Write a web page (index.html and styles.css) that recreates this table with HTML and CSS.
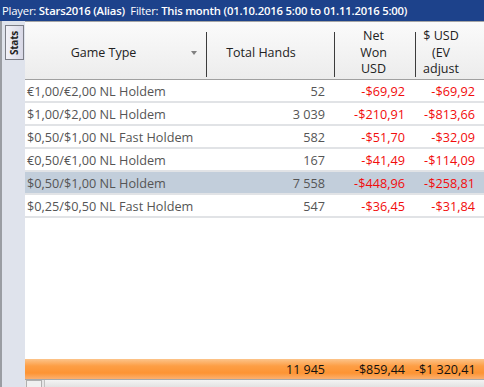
FILE: index.html
```html
<!DOCTYPE html>
<html>
<head>
<meta charset="utf-8">
<link rel="stylesheet" href="styles.css">
</head>
<body>
<div class="window">
  <div class="titlebar">Player: <b>Stars2016 (Alias)</b>&nbsp; Filter: <b>This month (01.10.2016 5:00 to 01.11.2016 5:00)</b></div>
  <div class="main">
    <div class="sidebar">
      <div class="tab"><span>Stats</span></div>
    </div>
    <div class="content">
      <div class="grid head">
        <div class="hcell c-game"><span>Game Type</span><i class="arrow"></i></div>
        <div class="hcell c-hands"><span>Total Hands</span></div>
        <div class="hcell c-net"><span>Net<br>Won<br>USD</span></div>
        <div class="hcell c-ev"><span>$ USD<br>(EV<br>adjust</span></div>
      </div>
      <div class="rows">
        <div class="grid row"><div class="game">€1,00/€2,00 NL Holdem</div><div class="num">52</div><div class="neg">-$69,92</div><div class="neg last">-$69,92</div></div>
        <div class="grid row"><div class="game">$1,00/$2,00 NL Holdem</div><div class="num">3 039</div><div class="neg">-$210,91</div><div class="neg last">-$813,66</div></div>
        <div class="grid row"><div class="game">$0,50/$1,00 NL Fast Holdem</div><div class="num">582</div><div class="neg">-$51,70</div><div class="neg last">-$32,09</div></div>
        <div class="grid row"><div class="game">€0,50/€1,00 NL Holdem</div><div class="num">167</div><div class="neg">-$41,49</div><div class="neg last">-$114,09</div></div>
        <div class="grid row selected"><div class="game">$0,50/$1,00 NL Holdem</div><div class="num">7 558</div><div class="neg">-$448,96</div><div class="neg last">-$258,81</div></div>
        <div class="grid row"><div class="game">$0,25/$0,50 NL Fast Holdem</div><div class="num">547</div><div class="neg">-$36,45</div><div class="neg last">-$31,84</div></div>
      </div>
      <div class="grid total"><div></div><div class="num">11 945</div><div class="num">-$859,44</div><div class="num last">-$1 320,41</div></div>
      <div class="hscroll"><div class="sbtn"></div><div class="strack"></div></div>
    </div>
  </div>
</div>
</body>
</html>
```
FILE: styles.css
```css
html, body {
  margin: 0;
  padding: 0;
  background: #ffffff;
}
.window {
  width: 484px;
  height: 387px;
  overflow: hidden;
  display: flex;
  flex-direction: column;
  font-family: "Open Sans", "Noto Sans", sans-serif;
  font-size: 12px;
}
.titlebar {
  height: 21px;
  flex: none;
  background: #1d428b;
  color: #ffffff;
  line-height: 21px;
  padding-left: 2px;
  white-space: nowrap;
  font-size: 11.3px;
  letter-spacing: -0.2px;
}
.titlebar b {
  font-weight: 600;
}
.main {
  flex: 1;
  display: flex;
  min-height: 0;
}
.sidebar {
  width: 23px;
  flex: none;
  border-left: 2px solid #9a9da3;
  background: #dfe3ec;
  padding-top: 4px;
}
.tab {
  margin-left: 3px;
  width: 17px;
  height: 33px;
  border: 1px solid #7b7d86;
  background: linear-gradient(to right, #f2f2f8, #d8d8e6);
  display: flex;
  align-items: center;
  justify-content: center;
}
.tab span {
  transform: rotate(-90deg);
  font-size: 10px;
  font-weight: 700;
  color: #222;
  white-space: nowrap;
  letter-spacing: -0.2px;
}
.content {
  flex: 1;
  display: flex;
  flex-direction: column;
  min-width: 0;
  overflow: hidden;
}
.grid {
  display: grid;
  grid-template-columns: 181px 128px 81px 80px;
}
.head {
  height: 57px;
  flex: none;
  border-top: 1px solid #a6a6a6;
  border-bottom: 1px solid #a0a0a0;
  background: linear-gradient(to bottom, #fbfbfb, #ececec);
  color: #222;
  font-size: 12.5px;
}
.hcell {
  position: relative;
  display: flex;
  align-items: center;
  justify-content: center;
  line-height: 16.5px;
  text-align: center;
  padding-top: 5px;
}
.hcell + .hcell::before {
  content: "";
  position: absolute;
  left: 0;
  top: 10px;
  bottom: 2px;
  width: 1px;
  background: #3c3c3c;
}
.c-game { padding-right: 24px; }
.c-hands { padding-right: 18px; }
.c-net { padding-right: 2px; }
.c-ev { justify-content: flex-start; padding-left: 4px; }
.c-ev span { width: 44px; }
.arrow {
  position: absolute;
  right: 9px;
  top: 29px;
  width: 0;
  height: 0;
  border-left: 3.5px solid transparent;
  border-right: 3.5px solid transparent;
  border-top: 4px solid #808080;
}
.rows {
  flex: 1;
}
.row {
  height: 21px;
  line-height: 23px;
  border-bottom: 2px solid #e1e3e6;
  color: #555555;
  white-space: nowrap;
  font-size: 12.7px;
}
.row.selected {
  background: #c2cedb;
}
.game {
  padding-left: 2px;
}
.num, .neg {
  text-align: right;
  padding-right: 9px;
}
.neg {
  color: #f20c0c;
  padding-right: 10px;
}
.last {
  padding-right: 9px;
}
.row .last { padding-right: 20px; }
.total {
  height: 20px;
  line-height: 21px;
  flex: none;
  background: linear-gradient(to bottom, #fcc48a 0%, #fd9e45 35%, #fd9433 70%, #fbb070 100%);
  color: #111;
  white-space: nowrap;
  font-size: 12.5px;
}
.total .num { padding-right: 10px; }
.total .num:nth-child(2) { padding-right: 9px; }
.total .last { padding-right: 20px; }
.hscroll {
  height: 7px;
  flex: none;
  border-top: 1px solid #a8a8a8;
  background: #e6e6e6;
  display: flex;
}
.sbtn {
  width: 14px;
  border: 1px solid #b0b0b0;
  border-bottom: none;
  background: #f0f0f0;
  margin-left: 1px;
}
.strack {
  flex: 1;
  margin-left: 2px;
  border-left: 1px solid #c0c0c0;
  background: linear-gradient(to bottom, #f4f4f4, #e2e2e2);
}
```
